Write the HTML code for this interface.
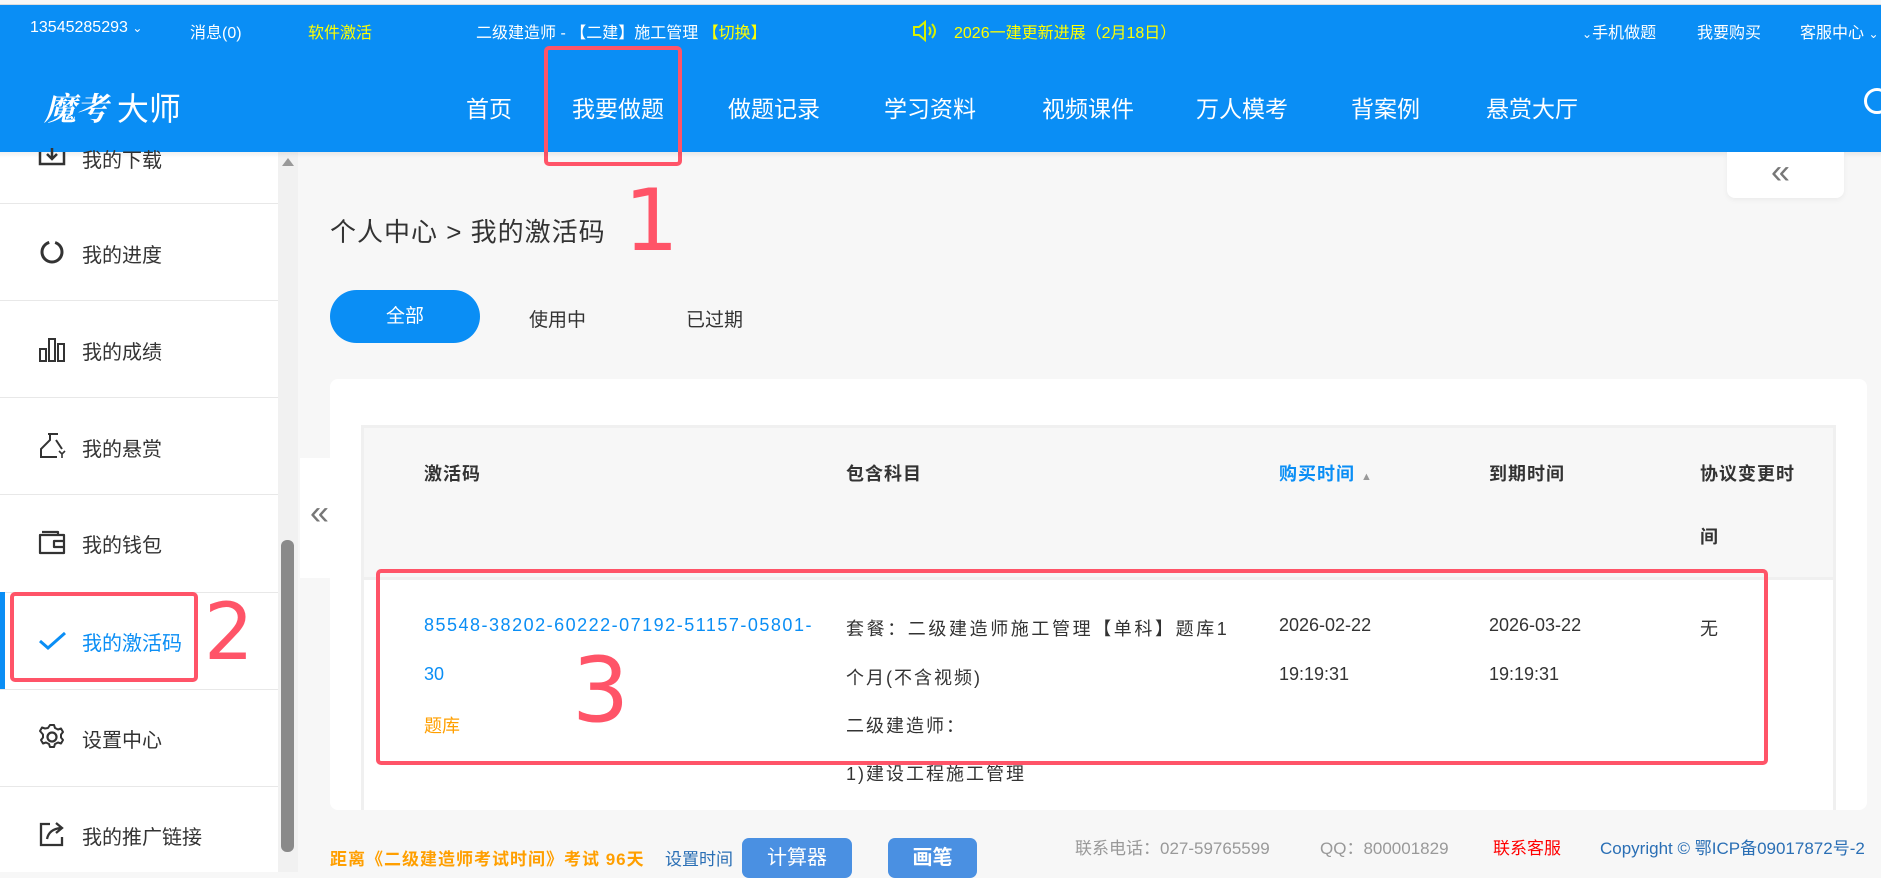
<!DOCTYPE html>
<html><head><meta charset="utf-8"><style>
*{margin:0;padding:0;box-sizing:border-box}
body{width:1881px;height:872px;overflow:hidden;background:#f7f7f7;font-family:"Liberation Sans","Noto Sans CJK SC",sans-serif;position:relative;color:#333}
.a{position:absolute;white-space:nowrap}
#top{position:absolute;left:0;top:4px;width:1881px;height:148px;background:#0a8ef5;border-top:1px solid #ddd}
.sb{font-size:16px;color:#fff;top:19px}
.nav{font-size:23px;color:#fff;top:90px}
.side{position:absolute;left:0;top:152px;width:278px;height:720px;background:#fff}
.sep{position:absolute;left:0;width:278px;height:1px;background:#e8e8e8}
.it{font-size:20px;color:#333}
.ic{position:absolute;left:38px}
.red{border:4px solid #ff5468;border-radius:5px;position:absolute}
.num{color:#ff5468;font-family:"DejaVu Sans",sans-serif;position:absolute;line-height:1}
.th{font-size:18px;font-weight:bold;color:#333;top:460px;letter-spacing:1px}
.td{font-size:18px;color:#333}
</style></head><body>
<div id="top"></div>
<div class="a sb" style="left:30px">13545285293 <span style="font-size:12px">&#8964;</span></div>
<div class="a sb" style="left:190px">消息(0)</div>
<div class="a sb" style="left:308px;color:#ffff00">软件激活</div>
<div class="a sb" style="left:476px">二级建造师 - 【二建】施工管理 <span style="color:#ffff00">【切换】</span></div>
<svg class="a" style="left:912px;top:20px" width="26" height="22" viewBox="0 0 26 22"><path d="M2 7h5l6-5v18l-6-5H2z" fill="none" stroke="#d8f000" stroke-width="2"/><path d="M17 7q3 4 0 8M20 4q6 7 0 14" fill="none" stroke="#d8f000" stroke-width="2"/></svg>
<div class="a sb" style="left:954px;color:#ffff00">2026一建更新进展（2月18日）</div>
<div class="a sb" style="left:1582px"><span style="font-size:12px">&#8964;</span>手机做题</div>
<div class="a sb" style="left:1697px">我要购买</div>
<div class="a sb" style="left:1800px">客服中心 <span style="font-size:12px">&#8964;</span></div>
<div class="a" style="left:44px;top:84px;color:#fff;font-size:32px"><span style="font-family:'Liberation Serif','Noto Serif CJK SC',serif;font-style:italic;font-weight:bold">魔考</span> 大师</div>
<div class="a nav" style="left:466px">首页</div>
<div class="a nav" style="left:572px">我要做题</div>
<div class="a nav" style="left:728px">做题记录</div>
<div class="a nav" style="left:884px">学习资料</div>
<div class="a nav" style="left:1042px">视频课件</div>
<div class="a nav" style="left:1196px">万人模考</div>
<div class="a nav" style="left:1351px">背案例</div>
<div class="a nav" style="left:1486px">悬赏大厅</div>
<div class="a" style="left:1864px;top:88px;width:26px;height:26px;border:3px solid #fff;border-radius:50%"></div>
<div class="red" style="left:544px;top:46px;width:138px;height:120px"></div>

<div class="side">
<div class="a it" style="left:82px;top:-8px">我的下载</div>
<svg class="ic" style="top:-4px" width="28" height="20" viewBox="0 0 28 20"><path d="M2 4v12h24V4M14 0v10M9 6l5 5 5-5" fill="none" stroke="#333" stroke-width="2.5"/></svg>
<div class="sep" style="top:51px"></div>
<div class="a it" style="left:82px;top:87px">我的进度</div>
<svg class="ic" style="top:86px" width="28" height="28" viewBox="0 0 28 28"><circle cx="14" cy="14" r="10" fill="none" stroke="#333" stroke-width="3" stroke-dasharray="44 6"/></svg>
<div class="sep" style="top:148px"></div>
<div class="a it" style="left:82px;top:184px">我的成绩</div>
<svg class="ic" style="top:183px" width="28" height="28" viewBox="0 0 28 28"><path d="M2 14h6v12H2zM11 4h6v22h-6zM20 9h6v17h-6z" fill="none" stroke="#333" stroke-width="2"/></svg>
<div class="sep" style="top:245px"></div>
<div class="a it" style="left:82px;top:281px">我的悬赏</div>
<svg class="ic" style="top:279px" width="28" height="28" viewBox="0 0 28 28"><path d="M10 3h10M12 3v6L3 18v8h16M18 9l6 9" fill="none" stroke="#333" stroke-width="2"/><path d="M21 20l3 3 3-3M24 23v4" fill="none" stroke="#333" stroke-width="1.6"/></svg>
<div class="sep" style="top:342px"></div>
<div class="a it" style="left:82px;top:377px">我的钱包</div>
<svg class="ic" style="top:376px" width="28" height="28" viewBox="0 0 28 28"><path d="M4 4h16v4M2 7h24v18H2zM16 13h10v6H16z" fill="none" stroke="#333" stroke-width="2.2" stroke-linejoin="round"/></svg>
<div class="sep" style="top:440px"></div>
<div style="position:absolute;left:0;top:440px;width:5px;height:97px;background:#0a8ef5"></div>
<div class="a it" style="left:82px;top:475px;color:#0a8ef5">我的激活码</div>
<svg class="ic" style="top:474px" width="28" height="28" viewBox="0 0 28 28"><path d="M2 15l8 7L27 7" fill="none" stroke="#0a8ef5" stroke-width="3"/></svg>
<div class="sep" style="top:537px"></div>
<div class="a it" style="left:82px;top:572px">设置中心</div>
<svg class="ic" style="top:571px" width="28" height="28" viewBox="0 0 28 28"><circle cx="14" cy="14" r="4.5" fill="none" stroke="#333" stroke-width="2.2"/><path d="M12 2h4l1 3 3 1.5 3-1 2 3.5-2 2.5v3l2 2.5-2 3.5-3-1-3 1.5-1 3h-4l-1-3-3-1.5-3 1-2-3.5 2-2.5v-3L2 8l2-3.5 3 1L10 5z" fill="none" stroke="#333" stroke-width="2" stroke-linejoin="round"/></svg>
<div class="sep" style="top:634px"></div>
<div class="a it" style="left:82px;top:669px">我的推广链接</div>
<svg class="ic" style="top:668px" width="28" height="28" viewBox="0 0 28 28"><path d="M12 4H3v21h21v-8M9 19q2-10 14-11M18 3l6 5-6 5" fill="none" stroke="#333" stroke-width="2.3"/></svg>
</div>
<div style="position:absolute;left:278px;top:152px;width:20px;height:720px;background:#f1f1f1"></div>
<div class="a" style="left:282px;top:158px;width:0;height:0;border-left:6px solid transparent;border-right:6px solid transparent;border-bottom:8px solid #999"></div>
<div style="position:absolute;left:281px;top:540px;width:13px;height:312px;background:#8a8a8a;border-radius:6px"></div>
<div style="position:absolute;left:0;top:152px;width:1881px;height:6px;background:linear-gradient(rgba(0,0,0,.06),rgba(0,0,0,0))"></div>
<div class="red" style="left:10px;top:592px;width:188px;height:90px"></div>
<div class="num" style="left:204px;top:594px;font-size:78px">2</div>

<div style="position:absolute;left:300px;top:458px;width:46px;height:120px;background:#fff;border-radius:0 8px 8px 0"></div>
<div class="a" style="left:310px;top:496px;font-size:34px;color:#777;line-height:1">«</div>
<div style="position:absolute;left:1727px;top:152px;width:117px;height:46px;background:#fff;border-radius:0 0 8px 8px;box-shadow:0 2px 6px rgba(0,0,0,.05)"></div>
<div class="a" style="left:1771px;top:155px;font-size:34px;color:#777;line-height:1">«</div>

<div class="a" style="left:330px;top:212px;font-size:26px;color:#333;letter-spacing:1px">个人中心 &gt; 我的激活码</div>
<div class="num" style="left:624px;top:178px;font-size:86px">1</div>
<div style="position:absolute;left:330px;top:290px;width:150px;height:53px;background:#0a8ef5;border-radius:27px;color:#fff;font-size:19px;text-align:center;line-height:53px">全部</div>
<div class="a" style="left:529px;top:305px;font-size:19px">使用中</div>
<div class="a" style="left:686px;top:305px;font-size:19px">已过期</div>

<div style="position:absolute;left:330px;top:379px;width:1537px;height:431px;background:#fff;border-radius:8px"></div>
<div style="position:absolute;left:361px;top:425px;width:1475px;height:385px;border:3px solid #f0f0f0;border-bottom:none"></div>
<div style="position:absolute;left:364px;top:428px;width:1469px;height:152px;background:#f7f7f7;border-bottom:3px solid #f0f0f0"></div>
<div class="a th" style="left:424px">激活码</div>
<div class="a th" style="left:846px">包含科目</div>
<div class="a th" style="left:1279px;color:#0a8ef5">购买时间 <span style="font-size:11px;color:#999">&#9650;</span></div>
<div class="a th" style="left:1489px">到期时间</div>
<div class="a th" style="left:1700px">协议变更时</div>
<div class="a th" style="left:1700px;top:523px">间</div>

<div class="a td" style="left:424px;top:615px;color:#0a8ef5;letter-spacing:1.5px">85548-38202-60222-07192-51157-05801-</div>
<div class="a td" style="left:424px;top:664px;color:#0a8ef5">30</div>
<div class="a td" style="left:424px;top:712px;color:#ff9f00">题库</div>
<div class="a td" style="left:846px;top:615px;letter-spacing:2.6px">套餐：二级建造师施工管理【单科】题库1</div>
<div class="a td" style="left:846px;top:664px;letter-spacing:2px">个月(不含视频)</div>
<div class="a td" style="left:846px;top:712px;letter-spacing:2px">二级建造师：</div>
<div class="a td" style="left:846px;top:760px;letter-spacing:2px">1)建设工程施工管理</div>
<div class="a td" style="left:1279px;top:615px">2026-02-22</div>
<div class="a td" style="left:1279px;top:664px">19:19:31</div>
<div class="a td" style="left:1489px;top:615px">2026-03-22</div>
<div class="a td" style="left:1489px;top:664px">19:19:31</div>
<div class="a td" style="left:1700px;top:615px">无</div>
<div class="red" style="left:376px;top:569px;width:1392px;height:196px"></div>
<div class="num" style="left:572px;top:646px;font-size:90px">3</div>

<div class="a" style="left:330px;top:845px;font-size:17px;font-weight:bold;color:#ff9f00;letter-spacing:1px">距离《二级建造师考试时间》考试 96天</div>
<div class="a" style="left:665px;top:845px;font-size:17px;color:#2a6fb5">设置时间</div>
<div style="position:absolute;left:742px;top:838px;width:110px;height:40px;background:#4a90e2;border-radius:7px;color:#fff;font-size:20px;text-align:center;line-height:40px">计算器</div>
<div style="position:absolute;left:888px;top:838px;width:89px;height:40px;background:#4a90e2;border-radius:7px;color:#fff;font-size:20px;font-weight:bold;text-align:center;line-height:40px">画笔</div>
<div class="a" style="left:1075px;top:834px;font-size:17px;color:#999">联系电话：027-59765599</div>
<div class="a" style="left:1320px;top:834px;font-size:17px;color:#999">QQ：800001829</div>
<div class="a" style="left:1493px;top:834px;font-size:17px;color:#f00">联系客服</div>
<div class="a" style="left:1600px;top:834px;font-size:17px;color:#2a6fb5">Copyright © 鄂ICP备09017872号-2</div>
</body></html>
